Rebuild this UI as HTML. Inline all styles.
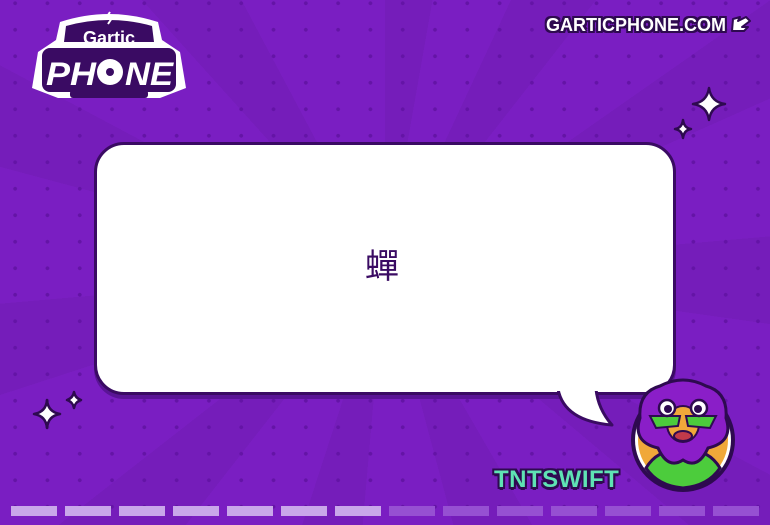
<!DOCTYPE html>
<html><head><meta charset="utf-8"><style>
html,body{margin:0;padding:0}
body{width:770px;height:525px;overflow:hidden;position:relative;background:#7a1ec2;font-family:"Liberation Sans","Noto Sans CJK SC",sans-serif}
.dots{position:absolute;inset:0;background-image:radial-gradient(circle,#6414a6 1.6px,transparent 2.2px);background-size:32.3px 26.5px;background-position:-1px -10px}
.rays{position:absolute;inset:0;background:conic-gradient(from 0deg at 385px 270px,rgba(0,0,0,.045) 0 10deg,transparent 10deg 25deg,rgba(0,0,0,.045) 25deg 38deg,transparent 38deg 55deg,rgba(0,0,0,.045) 55deg 66deg,transparent 66deg 85deg,rgba(0,0,0,.045) 85deg 98deg,transparent 98deg 118deg,rgba(0,0,0,.045) 118deg 130deg,transparent 130deg 150deg,rgba(0,0,0,.045) 150deg 165deg,transparent 165deg 185deg,rgba(0,0,0,.045) 185deg 198deg,transparent 198deg 218deg,rgba(0,0,0,.045) 218deg 232deg,transparent 232deg 252deg,rgba(0,0,0,.045) 252deg 265deg,transparent 265deg 285deg,rgba(0,0,0,.045) 285deg 298deg,transparent 298deg 318deg,rgba(0,0,0,.045) 318deg 332deg,transparent 332deg 360deg)}
.bubble{position:absolute;left:94px;top:142px;width:576px;height:247px;background:#fff;border:3px solid #3a0b63;border-radius:30px;box-shadow:0 4px 0 #5a1496}
.word{position:absolute;left:94px;top:137px;width:576px;height:253px;display:flex;align-items:center;justify-content:center;font-size:34px;color:#3a0b63}
.url{position:absolute;left:546px;top:15px;color:#fff;font-weight:bold;font-size:18px;text-shadow:-2px 0 #2e0a50,2px 0 #2e0a50,0 -2px #2e0a50,0 2px #2e0a50,-2px -2px #2e0a50,2px 2px #2e0a50,-2px 2px #2e0a50,2px -2px #2e0a50}
.name{position:absolute;left:494px;top:466px;color:#5fe3b4;font-weight:bold;font-size:24px;letter-spacing:.5px;text-shadow:-2px 0 #2e0a50,2px 0 #2e0a50,0 -2px #2e0a50,0 3px #2e0a50,-2px -2px #2e0a50,2px 2px #2e0a50,-2px 2px #2e0a50,2px -2px #2e0a50}
.bar{position:absolute;top:506px;width:46px;height:10px}
</style></head><body>
<div class="rays"></div>
<div class="dots"></div>

<svg style="position:absolute;left:30px;top:8px" width="158" height="95" viewBox="0 0 158 95">
<path d="M30 14 Q79 -2 128 14 L132 32 L150 44 L156 80 L130 90 L28 90 L2 80 L8 44 L26 32 Z" fill="#fff"/>
<path d="M36 18 Q79 6 122 18 L124 34 L34 34 Z" fill="#3a0b63"/>
<rect x="12" y="40" width="134" height="44" rx="8" fill="#3a0b63"/>
<rect x="40" y="82" width="78" height="8" rx="3" fill="#3a0b63"/>
<text x="79" y="36" text-anchor="middle" font-family="Liberation Sans" font-weight="bold" font-size="18" fill="#fff">Gartic</text>
<text x="16" y="77" font-family="Liberation Sans" font-weight="bold" font-size="32" fill="#fff" font-style="italic" textLength="50" lengthAdjust="spacingAndGlyphs">PH</text>
<circle cx="80" cy="64" r="13" fill="#fff"/><circle cx="80" cy="64" r="4" fill="#3a0b63"/>
<text x="95" y="77" font-family="Liberation Sans" font-weight="bold" font-size="32" fill="#fff" font-style="italic" textLength="48" lengthAdjust="spacingAndGlyphs">NE</text>
<path d="M80 4 L76 10 L82 10 L78 16" stroke="#fff" stroke-width="2" fill="none"/>
</svg>

<div class="url">GARTICPHONE.COM</div>
<svg style="position:absolute;left:730px;top:15px" width="22" height="18" viewBox="0 0 22 18"><path d="M3 4 L10 2 L8 6 L16 2 L20 6 L12 12 L18 12 L14 16 L2 16 Z" fill="#fff" stroke="#2e0a50" stroke-width="2" stroke-linejoin="round"/></svg>

<svg style="position:absolute;left:0;top:0" width="770" height="525">
<g fill="#fff" stroke="#2e0a50" stroke-width="2.5" stroke-linejoin="round">
<path d="M709 88 Q711 102 725 104 Q711 106 709 120 Q707 106 693 104 Q707 102 709 88Z"/>
<path d="M683 120 Q684 128 691 129 Q684 130 683 138 Q682 130 675 129 Q682 128 683 120Z"/>
<path d="M47 400 Q48 412 60 414 Q48 416 47 428 Q46 416 34 414 Q46 412 47 400Z"/>
<path d="M74 392 Q75 398 81 400 Q75 402 74 408 Q73 402 67 400 Q73 398 74 392Z"/>
</g>
</svg>

<div class="bubble"></div>
<svg style="position:absolute;left:550px;top:385px" width="70" height="45"><path d="M8 4 Q14 36 62 40 Q48 24 46 4 Z" fill="#fff" stroke="#3a0b63" stroke-width="3" stroke-linejoin="round"/><rect x="4" y="0" width="46" height="6" fill="#fff"/></svg>
<div class="word">蟬</div>

<svg style="position:absolute;left:628px;top:378px" width="112" height="118" viewBox="0 0 112 118">
<circle cx="55" cy="62" r="52" fill="#2e0a50"/>
<circle cx="55" cy="62" r="48" fill="#fff"/>
<circle cx="55" cy="62" r="45" fill="#f0a83a"/>
<path d="M18 90 Q30 70 55 72 Q80 70 92 90 Q80 108 55 110 Q30 108 18 90Z" fill="#4ccc3c" stroke="#2e0a50" stroke-width="3"/>
<path d="M32 8 Q55 -4 78 8 Q100 14 98 40 Q106 64 80 70 Q70 92 55 82 Q40 92 30 70 Q4 64 12 40 Q10 14 32 8Z" fill="#8a1ec8" stroke="#2e0a50" stroke-width="3"/>
<ellipse cx="55" cy="46" rx="16" ry="18" fill="#f0a83a" stroke="#2e0a50" stroke-width="2"/>
<path d="M22 38 L52 38 L50 48 L28 50Z M58 38 L88 38 L82 50 L60 48Z" fill="#4ccc3c" stroke="#2e0a50" stroke-width="2"/>
<circle cx="39" cy="30" r="8" fill="#fff" stroke="#2e0a50" stroke-width="2.5"/><circle cx="40" cy="31" r="4" fill="#2e0a50"/>
<circle cx="71" cy="30" r="8" fill="#fff" stroke="#2e0a50" stroke-width="2.5"/><circle cx="70" cy="31" r="4" fill="#2e0a50"/>
<ellipse cx="55" cy="58" rx="9" ry="5" fill="#c23a4a" stroke="#2e0a50" stroke-width="2"/>
</svg>

<div class="name">TNTSWIFT</div>

<div class="bar" style="left:11px;background:#c9a7ea"></div>
<div class="bar" style="left:65px;background:#c9a7ea"></div>
<div class="bar" style="left:119px;background:#c9a7ea"></div>
<div class="bar" style="left:173px;background:#c9a7ea"></div>
<div class="bar" style="left:227px;background:#c9a7ea"></div>
<div class="bar" style="left:281px;background:#c9a7ea"></div>
<div class="bar" style="left:335px;background:#c9a7ea"></div>
<div class="bar" style="left:389px;background:#9650d2"></div>
<div class="bar" style="left:443px;background:#9650d2"></div>
<div class="bar" style="left:497px;background:#9650d2"></div>
<div class="bar" style="left:551px;background:#9650d2"></div>
<div class="bar" style="left:605px;background:#9650d2"></div>
<div class="bar" style="left:659px;background:#9650d2"></div>
<div class="bar" style="left:713px;background:#9650d2"></div>
</body></html>
